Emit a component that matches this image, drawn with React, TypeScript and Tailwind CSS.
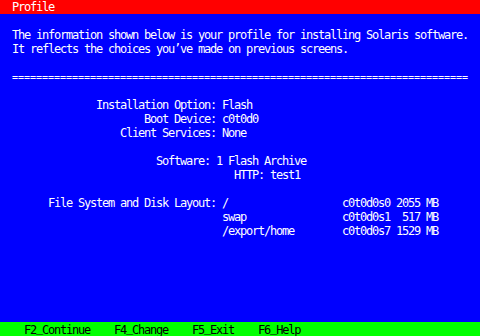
// Solaris installer "Profile" screen, drawn as an 80x24 character terminal
// (each cell is 6px wide and 14px tall).

type Cell = [number, string];

// Build one terminal line from [column, text] pairs.
const at = (cells: Cell[]) => {
  let line = "";
  for (const [col, text] of cells) {
    line = line.padEnd(col, " ") + text;
  }
  return line;
};

const bodyLines: string[] = [
  "",
  at([[2, "The information shown below is your profile for installing Solaris software."]]),
  at([[2, "It reflects the choices you’ve made on previous screens."]]),
  "",
  "RULE",
  "",
  at([[16, "Installation Option: Flash"]]),
  at([[24, "Boot Device: c0t0d0"]]),
  at([[20, "Client Services: None"]]),
  "",
  at([[26, "Software: 1 Flash Archive"]]),
  at([[39, "HTTP: test1"]]),
  "",
  at([[8, "File System and Disk Layout: /"], [57, "c0t0d0s0 2055 MB"]]),
  at([[37, "swap"], [57, "c0t0d0s1  517 MB"]]),
  at([[37, "/export/home"], [57, "c0t0d0s7 1529 MB"]]),
];

const footer = at([
  [4, "F2_Continue"],
  [19, "F4_Change"],
  [32, "F5_Exit"],
  [43, "F6_Help"],
]);

function Line({ text, className = "" }: { text: string; className?: string }) {
  return (
    <div className={`h-[14px] leading-[14px] whitespace-pre ${className}`}>
      {text}
    </div>
  );
}

export default function App() {
  return (
    <div className="w-[480px] h-[336px] overflow-hidden flex flex-col bg-[#0000ff] text-white text-[12px] tracking-[-1.2246px] font-['DejaVu_Sans_Mono','Liberation_Mono',monospace]">
      {/* Title bar */}
      <div className="bg-[#ff0000]">
        <Line text={at([[2, "Profile"]])} />
      </div>

      {/* Body */}
      <div className="flex-1">
        {bodyLines.map((l, i) =>
          l === "RULE" ? (
            // smaller glyphs so each "=" keeps a gap to the next one
            <Line
              key={i}
              text={at([[2, "=".repeat(76)]])}
              className="text-[10px] tracking-[-0.02px] pt-[1px]"
            />
          ) : (
            <Line key={i} text={l} />
          )
        )}
      </div>

      {/* Function keys */}
      <div className="h-[14px] bg-[#00ff00] text-black">
        <div className="h-[14px] leading-[13px] whitespace-pre">
          {footer.split("_").map((part, i) => (
            <span key={i}>
              {i > 0 && <span className="align-[2px]">_</span>}
              {part}
            </span>
          ))}
        </div>
      </div>
    </div>
  );
}
